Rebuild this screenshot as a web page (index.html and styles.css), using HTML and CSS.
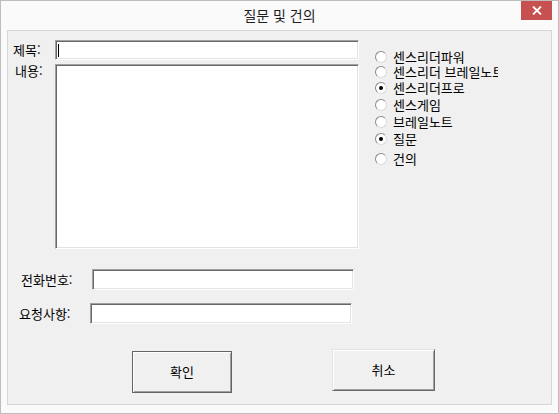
FILE: index.html
```html
<!DOCTYPE html>
<html lang="ko">
<head>
<meta charset="utf-8">
<title>질문 및 건의</title>
<link rel="stylesheet" href="styles.css">
</head>
<body>
<div class="window">
  <div class="titlebar">
    <div></div>
    <div class="title">질문 및 건의</div>
    <div class="controls">
      <div class="close">
        <svg width="10" height="9" viewBox="0 0 10 9"><path d="M1 0.5 L9 8.5 M9 0.5 L1 8.5" stroke="#fff" stroke-width="1.8" fill="none"/></svg>
      </div>
    </div>
  </div>
  <div class="client">
    <div class="top">
      <div class="labels">
        <div class="lbl lbl-subject">제목:</div>
        <div class="lbl lbl-content">내용:</div>
      </div>
      <div class="fields">
        <div class="field subject"><span class="caret"></span></div>
        <div class="field content"></div>
      </div>
      <ul class="radios">
        <li><span class="radio"></span><span class="rtext">센스리더파워</span></li>
        <li><span class="radio"></span><span class="rtext">센스리더 브레일노트</span></li>
        <li><span class="radio checked"></span><span class="rtext">센스리더프로</span></li>
        <li><span class="radio"></span><span class="rtext">센스게임</span></li>
        <li><span class="radio"></span><span class="rtext">브레일노트</span></li>
        <li><span class="radio checked"></span><span class="rtext">질문</span></li>
        <li><span class="radio"></span><span class="rtext">건의</span></li>
      </ul>
    </div>
    <div class="row phone">
      <span class="rlabel">전화번호:</span>
      <div class="field line"></div>
    </div>
    <div class="row request">
      <span class="rlabel">요청사항:</span>
      <div class="field line"></div>
    </div>
    <div class="buttons">
      <div class="btn btn-default">확인</div>
      <div class="btn btn-cancel">취소</div>
    </div>
  </div>
</div>
</body>
</html>
```

FILE: styles.css
```css
html, body {
  margin: 0;
  padding: 0;
  background: #ffffff;
}

body {
  font-family: "Noto Sans CJK KR", "Noto Sans", sans-serif;
  font-size: 13px;
  color: #000;
}

.window {
  width: 559px;
  height: 414px;
  box-sizing: border-box;
  border: 1px solid #bdbdbd;
  background: #fafafa;
}

.titlebar {
  height: 29px;
  display: grid;
  grid-template-columns: 1fr auto 1fr;
}

.title {
  align-self: center;
  font-size: 14px;
  line-height: 16px;
  color: #1e1e1e;
  padding-bottom: 1px;
}

.controls {
  display: flex;
  justify-content: flex-end;
  align-items: flex-start;
}

.close {
  width: 31px;
  height: 19px;
  margin-right: 6px;
  background: #c75050;
  display: flex;
  align-items: center;
  justify-content: center;
}

.client {
  margin: 0 6px;
  height: 375px;
  box-sizing: border-box;
  border: 1px solid #d6d6d6;
  background: #f0f0f0;
}

.top {
  display: flex;
  margin-top: 9px;
}

.labels {
  width: 47px;
}

.lbl {
  white-space: nowrap;
}

.lbl-subject {
  height: 20px;
  line-height: 20px;
  padding-left: 5px;
}

.lbl-content {
  margin-top: 4px;
  line-height: 14px;
  padding-left: 7px;
}

.fields {
  width: 304px;
  display: flex;
  flex-direction: column;
  gap: 4px;
}

.field {
  box-sizing: border-box;
  background: #fff;
  border: 1px solid;
  border-color: #a0a0a0 #ffffff #ffffff #a0a0a0;
  box-shadow: inset 1px 1px 0 #696969, inset -1px -1px 0 #e3e3e3;
}

.subject {
  height: 20px;
  display: flex;
  align-items: center;
  padding-left: 2px;
}

.caret {
  width: 1px;
  height: 13px;
  background: #000;
}

.content {
  height: 185px;
}

.radios {
  list-style: none;
  margin: 0 0 0 16px;
  padding: 0;
  width: 123px;
  overflow: hidden;
}

.radios li {
  display: flex;
  align-items: center;
  height: 14px;
  white-space: nowrap;
}

.radios li:nth-child(1) { margin-top: 10px; }
.radios li:nth-child(2) { margin-top: 1px; }
.radios li:nth-child(3) { margin-top: 2px; }
.radios li:nth-child(4) { margin-top: 3px; }
.radios li:nth-child(5) { margin-top: 3px; }
.radios li:nth-child(6) { margin-top: 3px; }
.radios li:nth-child(7) { margin-top: 6px; }

.radio {
  flex: none;
  width: 12px;
  height: 12px;
  box-sizing: border-box;
  border-radius: 50%;
  border: 1px solid;
  border-color: #8a8a8a #dadada #dadada #8a8a8a;
  background: #fff;
  display: flex;
  align-items: center;
  justify-content: center;
  margin-right: 6px;
}

.radio.checked::after {
  content: "";
  width: 4px;
  height: 4px;
  border-radius: 50%;
  background: #000;
}

.rtext {
  display: block;
  height: 14px;
  line-height: 14px;
}

.row {
  display: flex;
  align-items: center;
}

.rlabel {
  box-sizing: border-box;
  white-space: nowrap;
  line-height: 14px;
}

.phone {
  margin-top: 20px;
}

.phone .rlabel {
  width: 84px;
  padding-left: 13px;
}

.request {
  margin-top: 13px;
}

.request .rlabel {
  width: 82px;
  padding-left: 11px;
}

.line {
  width: 262px;
  height: 21px;
}

.buttons {
  display: flex;
  align-items: flex-start;
  margin-top: 25px;
}

.btn {
  box-sizing: border-box;
  height: 42px;
  display: flex;
  align-items: center;
  justify-content: center;
  background: #f0f0f0;
  line-height: 14px;
}

.btn-default {
  width: 100px;
  margin-left: 124px;
  margin-top: 2px;
  border: 1px solid #646464;
  box-shadow: inset 1px 1px 0 #ffffff, inset -1px -1px 0 #a0a0a0;
}

.btn-cancel {
  width: 103px;
  margin-left: 100px;
  border: 1px solid;
  border-color: #e3e3e3 #696969 #696969 #e3e3e3;
  box-shadow: inset 1px 1px 0 #ffffff, inset -1px -1px 0 #a0a0a0;
}
```
